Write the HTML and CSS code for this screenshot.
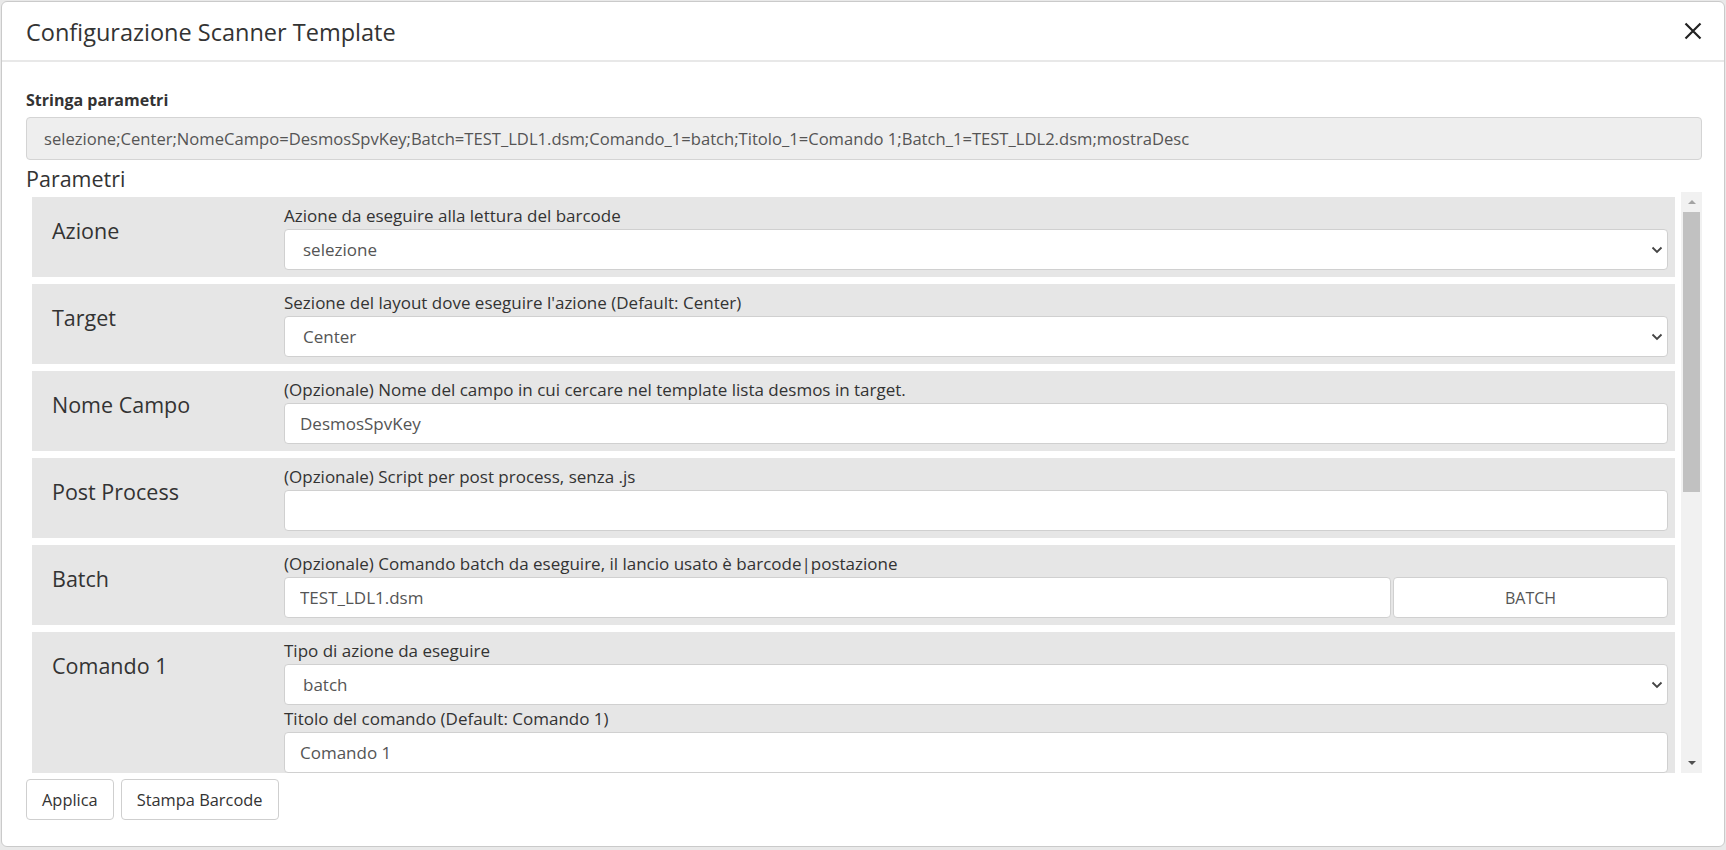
FILE: index.html
```html
<!DOCTYPE html>
<html lang="it">
<head>
<meta charset="utf-8">
<title>Configurazione Scanner Template</title>
<link rel="stylesheet" href="styles.css">
</head>
<body>
<div class="modal">
  <div class="modal-header">
    <h4 class="modal-title">Configurazione Scanner Template</h4>
    <button class="close" type="button" aria-label="Chiudi">
      <svg width="18" height="18" viewBox="0 0 18 18"><path d="M1.5 1.5L16.5 16.5M16.5 1.5L1.5 16.5" stroke="#222" stroke-width="2.2" fill="none"/></svg>
    </button>
  </div>
  <div class="modal-body">
    <label class="str-label">Stringa parametri</label>
    <input class="str-input" type="text" readonly value="selezione;Center;NomeCampo=DesmosSpvKey;Batch=TEST_LDL1.dsm;Comando_1=batch;Titolo_1=Comando 1;Batch_1=TEST_LDL2.dsm;mostraDesc">
    <h4 class="section-title">Parametri</h4>
    <div class="scroll-wrap">
      <div class="scroll-content">
        <div class="param-row">
          <div class="param-name">Azione</div>
          <div class="param-fields">
            <div class="field-desc">Azione da eseguire alla lettura del barcode</div>
            <div class="select-wrap">
              <select class="ctl sel"><option>selezione</option></select>
              <svg class="chev" width="12" height="8" viewBox="0 0 12 8"><path d="M1.5 1.5L6 6L10.5 1.5" stroke="#444" stroke-width="1.8" fill="none"/></svg>
            </div>
          </div>
        </div>
        <div class="param-row">
          <div class="param-name">Target</div>
          <div class="param-fields">
            <div class="field-desc">Sezione del layout dove eseguire l'azione (Default: Center)</div>
            <div class="select-wrap">
              <select class="ctl sel"><option>Center</option></select>
              <svg class="chev" width="12" height="8" viewBox="0 0 12 8"><path d="M1.5 1.5L6 6L10.5 1.5" stroke="#444" stroke-width="1.8" fill="none"/></svg>
            </div>
          </div>
        </div>
        <div class="param-row">
          <div class="param-name">Nome Campo</div>
          <div class="param-fields">
            <div class="field-desc">(Opzionale) Nome del campo in cui cercare nel template lista desmos in target.</div>
            <input class="ctl txt" type="text" value="DesmosSpvKey">
          </div>
        </div>
        <div class="param-row">
          <div class="param-name">Post Process</div>
          <div class="param-fields">
            <div class="field-desc">(Opzionale) Script per post process, senza .js</div>
            <input class="ctl txt" type="text" value="">
          </div>
        </div>
        <div class="param-row">
          <div class="param-name">Batch</div>
          <div class="param-fields">
            <div class="field-desc">(Opzionale) Comando batch da eseguire, il lancio usato è barcode|postazione</div>
            <div class="input-group">
              <input class="ctl txt" type="text" value="TEST_LDL1.dsm">
              <button class="group-btn" type="button">BATCH</button>
            </div>
          </div>
        </div>
        <div class="param-row">
          <div class="param-name">Comando 1</div>
          <div class="param-fields">
            <div class="field-desc">Tipo di azione da eseguire</div>
            <div class="select-wrap">
              <select class="ctl sel"><option>batch</option></select>
              <svg class="chev" width="12" height="8" viewBox="0 0 12 8"><path d="M1.5 1.5L6 6L10.5 1.5" stroke="#444" stroke-width="1.8" fill="none"/></svg>
            </div>
            <div class="field-desc">Titolo del comando (Default: Comando 1)</div>
            <input class="ctl txt" type="text" value="Comando 1">
          </div>
        </div>
      </div>
      <div class="scrollbar">
        <div class="sb-btn"><span class="tri-up"></span></div>
        <div class="sb-track"><div class="sb-thumb"></div></div>
        <div class="sb-btn"><span class="tri-down"></span></div>
      </div>
    </div>
    <div class="actions">
      <button class="btn" type="button">Applica</button>
      <button class="btn" type="button">Stampa Barcode</button>
    </div>
  </div>
</div>
</body>
</html>
```
FILE: styles.css
```css
html, body {
  margin: 0;
  padding: 0;
}
body {
  background: #e9e9e9;
  font-family: "Open Sans", "Noto Sans", sans-serif;
  color: #333;
  overflow: hidden;
}
.modal {
  margin: 1px 1px 0 1px;
  height: 846px;
  box-sizing: border-box;
  background: #fff;
  border: 1px solid #cacaca;
  border-radius: 6px;
  display: flex;
  flex-direction: column;
}
.modal-header {
  height: 58px;
  border-bottom: 2px solid #e8e8e8;
  display: flex;
  align-items: center;
  justify-content: space-between;
  padding: 0 22px 0 24px;
}
.modal-title {
  margin: 0;
  font-size: 23.5px;
  font-weight: 400;
  color: #333;
  line-height: 30px;
  padding-top: 2px;
}
.close {
  border: 0;
  background: transparent;
  padding: 0;
  width: 18px;
  height: 18px;
  display: flex;
  cursor: pointer;
}
.modal-body {
  padding: 27px 22px 0 24px;
  display: flex;
  flex-direction: column;
}
.str-label {
  display: block;
  font-weight: 700;
  font-size: 16px;
  line-height: 22px;
  color: #333;
}
.str-input {
  margin-top: 6px;
  width: 100%;
  height: 43px;
  box-sizing: border-box;
  background: #eeeeee;
  border: 1px solid #d4d4d4;
  border-radius: 4px;
  padding: 0 17px;
  font-family: "Open Sans", "Noto Sans", sans-serif;
  font-size: 16.6px;
  color: #555;
  outline: none;
}
.section-title {
  margin: 5px 0 0;
  font-size: 21.5px;
  line-height: 27px;
  font-weight: 400;
  color: #333;
}
.scroll-wrap {
  display: flex;
  height: 581px;
}
.scroll-content {
  flex: 1;
  overflow: hidden;
  padding: 5px 6px 0 6px;
  display: flex;
  flex-direction: column;
  gap: 7px;
}
.param-row {
  flex-shrink: 0;
  display: flex;
  background: #e6e6e6;
  padding: 5px 7px 7px 0;
}
.param-name {
  width: 232px;
  flex-shrink: 0;
  padding-left: 20px;
  padding-top: 17px;
  font-size: 21.5px;
  line-height: 24px;
  color: #333;
}
.param-fields {
  flex: 1;
  min-width: 0;
  display: flex;
  flex-direction: column;
}
.field-desc {
  font-size: 17px;
  line-height: 27px;
  color: #333;
  white-space: nowrap;
}
.ctl {
  display: block;
  width: 100%;
  height: 41px;
  box-sizing: border-box;
  background: #fff;
  border: 1px solid #d0d0d0;
  border-radius: 4px;
  font-family: "Open Sans", "Noto Sans", sans-serif;
  font-size: 17px;
  color: #555;
  outline: none;
  margin: 0;
}
.txt {
  padding: 0 15px;
}
.select-wrap {
  position: relative;
}
.sel {
  appearance: none;
  -webkit-appearance: none;
  padding: 0 30px 0 18px;
}
.chev {
  position: absolute;
  right: 5px;
  top: 17px;
  pointer-events: none;
}
.input-group {
  display: flex;
  gap: 2px;
}
.input-group .txt {
  flex: 1;
  min-width: 0;
}
.group-btn {
  width: 275px;
  flex-shrink: 0;
  height: 41px;
  box-sizing: border-box;
  background: #fff;
  border: 1px solid #d0d0d0;
  border-radius: 4px;
  font-family: "Open Sans", "Noto Sans", sans-serif;
  font-size: 16px;
  color: #555;
}
.scrollbar {
  width: 21px;
  flex-shrink: 0;
  background: #f1f1f1;
  display: flex;
  flex-direction: column;
}
.sb-btn {
  height: 20px;
  display: flex;
  align-items: center;
  justify-content: center;
}
.tri-up {
  width: 0;
  height: 0;
  border-left: 4.5px solid transparent;
  border-right: 4.5px solid transparent;
  border-bottom: 4.5px solid #a3a3a3;
}
.tri-down {
  width: 0;
  height: 0;
  border-left: 4.5px solid transparent;
  border-right: 4.5px solid transparent;
  border-top: 4.5px solid #505050;
}
.sb-track {
  flex: 1;
}
.sb-thumb {
  height: 280px;
  margin: 0 2px;
  background: #c1c1c1;
}
.actions {
  margin-top: 6px;
  display: flex;
  gap: 7px;
}
.btn {
  height: 41px;
  padding: 0 15px;
  box-sizing: border-box;
  background: #fff;
  border: 1px solid #cfcfcf;
  border-radius: 4px;
  font-family: "Open Sans", "Noto Sans", sans-serif;
  font-size: 16.4px;
  color: #333;
}
```
